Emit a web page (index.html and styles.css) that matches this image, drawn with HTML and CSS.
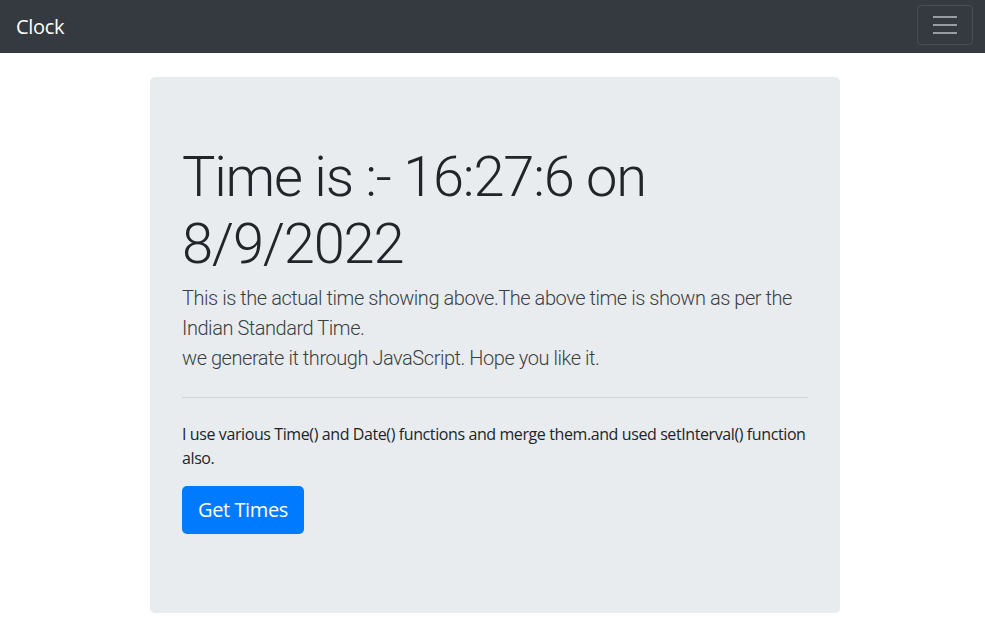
FILE: index.html
```html
<!DOCTYPE html>
<html lang="en">
<head>
<meta charset="utf-8">
<title>Clock</title>
<link rel="stylesheet" href="styles.css">
</head>
<body>
<nav class="navbar">
  <a class="brand" href="#">Clock</a>
  <button class="toggler" type="button" aria-label="Toggle navigation">
    <span class="toggler-icon"><span></span><span></span><span></span></span>
  </button>
</nav>
<main class="container">
  <div class="jumbotron">
    <h1 class="display">Time is :- 16:27:6 on 8/9/2022</h1>
    <p class="lead">This is the actual time showing above.The above time is shown as per the Indian Standard Time.<br>we generate it through JavaScript. Hope you like it.</p>
    <hr class="divider">
    <p class="info">I use various Time() and Date() functions and merge them.and used setInterval() function also.</p>
    <div class="actions"><a class="btn" href="#">Get Times</a></div>
  </div>
</main>
</body>
</html>
```
FILE: styles.css
```css
* { box-sizing: border-box; }
html, body { margin: 0; padding: 0; }
body {
  font-family: "Open Sans", "Noto Sans", sans-serif;
  color: #212529;
  background: #fff;
  font-size: 16px;
  line-height: 1.5;
}
.navbar {
  height: 53px;
  background: #343a40;
  display: flex;
  align-items: center;
  justify-content: space-between;
  padding: 0 12px 0 16px;
}
.brand {
  color: #fff;
  text-decoration: none;
  font-size: 20px;
  line-height: 30px;
  letter-spacing: -0.3px;
}
.toggler {
  width: 56px;
  height: 40px;
  background: transparent;
  border: 1px solid rgba(255,255,255,.1);
  border-radius: 4px;
  display: flex;
  align-items: center;
  justify-content: center;
  padding: 0;
  margin-top: -4px;
}
.toggler-icon {
  display: flex;
  flex-direction: column;
  gap: 6px;
  width: 24px;
}
.toggler-icon span {
  display: block;
  height: 2px;
  background: rgba(255,255,255,.5);
}
.container {
  width: 690px;
  margin: 24px 0 0 calc(50% - 342.5px);
}
.jumbotron {
  background: #e9ecef;
  border-radius: 5px;
  padding: 64px 32px;
}
.display {
  font-family: Roboto, "Open Sans", sans-serif;
  font-size: 56px;
  font-weight: 300;
  line-height: 1.2;
  letter-spacing: -1.2px;
  margin: 0 0 5px;
  padding-top: 3px;
}
.lead {
  font-family: Roboto, "Open Sans", sans-serif;
  font-size: 20px;
  font-weight: 300;
  line-height: 30px;
  letter-spacing: -0.45px;
  margin: 0;
  color: #3a3f44;
}
.divider {
  border: 0;
  border-top: 1px solid rgba(0,0,0,.1);
  margin: 24px 0;
}
.info {
  font-size: 16px;
  line-height: 24px;
  margin: 0 0 16px;
  letter-spacing: -0.4px;
}
.actions { margin-bottom: 15px; }
.btn {
  display: inline-block;
  background: #007bff;
  color: #fff;
  text-decoration: none;
  font-size: 20px;
  line-height: 30px;
  padding: 9px 16px;
  border-radius: 5px;
  letter-spacing: -0.4px;
}
```
